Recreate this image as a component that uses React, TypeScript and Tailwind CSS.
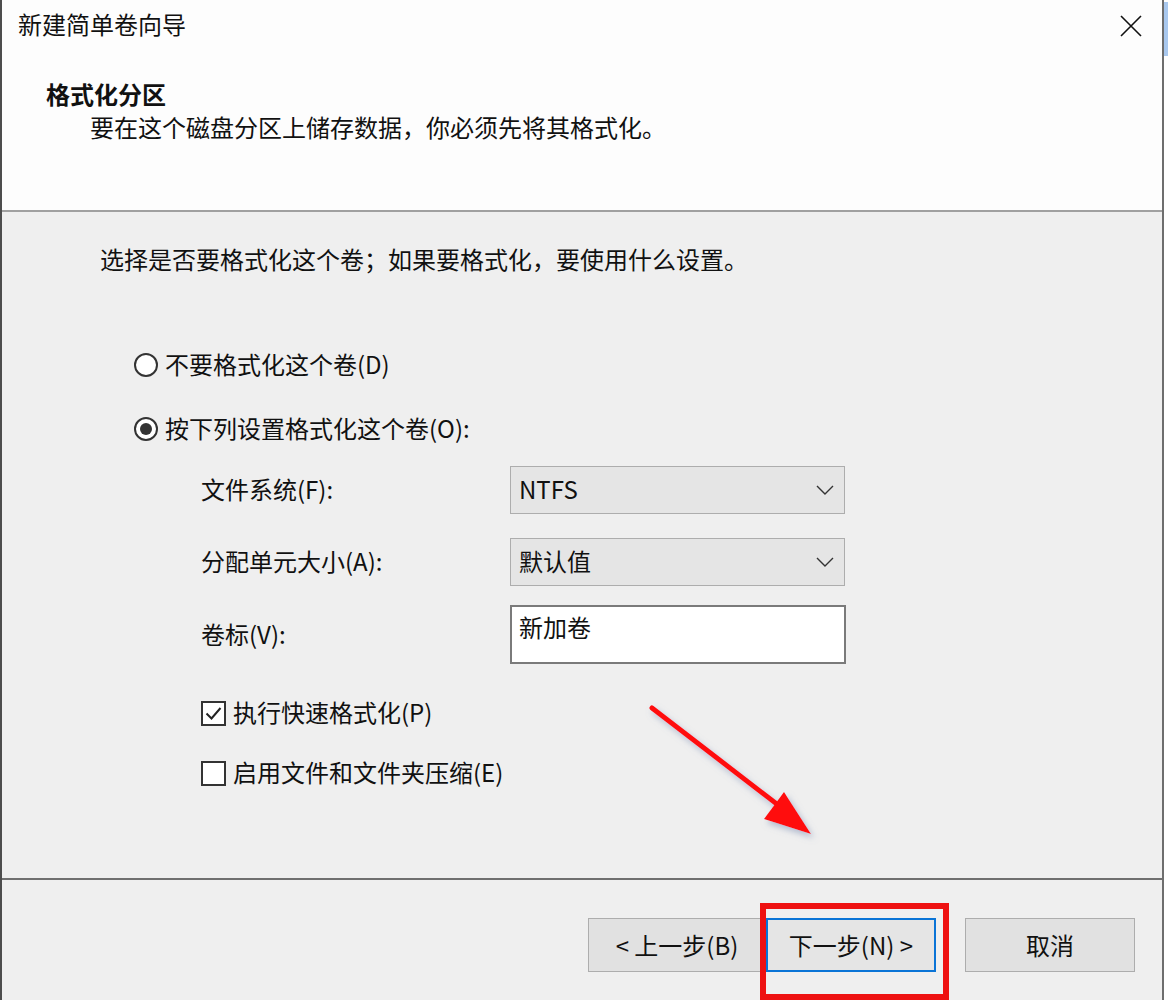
import React from "react";

const font = { fontFamily: '"Noto Sans CJK SC", "Noto Sans", sans-serif' };

function Radio({ checked, label }: { checked?: boolean; label: string }) {
  return (
    <div className="flex h-[32px] items-center">
      <span className="flex h-[24px] w-[24px] items-center justify-center rounded-full border-2 border-[#333] bg-white">
        {checked && <span className="h-[12px] w-[12px] rounded-full bg-[#333]" />}
      </span>
      <span className="ml-[7px] -translate-y-[1px]">{label}</span>
    </div>
  );
}

function Check({ checked, label }: { checked?: boolean; label: string }) {
  return (
    <div className="flex h-[32px] items-center">
      <span className="flex h-[25px] w-[25px] items-center justify-center border-2 border-[#333] bg-white">
        {checked && (
          <svg width="19" height="19" viewBox="0 0 19 19">
            <path d="M2.5 9.5 L7.5 14.5 L16.5 4" fill="none" stroke="#222" strokeWidth="2" />
          </svg>
        )}
      </span>
      <span className="ml-[7px] -translate-y-[1px]">{label}</span>
    </div>
  );
}

function Select({ value }: { value: string }) {
  return (
    <div className="flex h-[48px] w-[335px] items-center justify-between border border-[#adadad] bg-[#e5e5e5] pl-[8px] pr-[10px]">
      <span className="-translate-y-[1px]">{value}</span>
      <svg width="18" height="10" viewBox="0 0 18 10">
        <path d="M1 1 L9 9 L17 1" fill="none" stroke="#333" strokeWidth="1.4" />
      </svg>
    </div>
  );
}

function FormRow({ label, children, className }: { label: string; children: React.ReactNode; className?: string }) {
  return (
    <div className={"flex items-center " + (className ?? "")}>
      <span className="w-[309px] -translate-y-[1px]">{label}</span>
      {children}
    </div>
  );
}

export default function App() {
  return (
    <div className="relative flex h-[1000px] w-[1168px] overflow-hidden text-[24px] text-[#111]" style={font}>
      {/* dialog */}
      <div className="flex w-[1162px] flex-col border-l-2 border-[#4d4d4d]">
        {/* header */}
        <div className="h-[210px] bg-[#fdfdfd]">
          <div className="flex items-center justify-between pl-[16px] pr-[19px] pt-[8px]">
            <span className="leading-[32px]">新建简单卷向导</span>
            <svg width="24" height="24" viewBox="0 0 24 24" className="translate-y-[2px]">
              <path d="M2 2 L22 22 M22 2 L2 22" stroke="#111" strokeWidth="1.6" />
            </svg>
          </div>
          <div className="mt-[38px] pl-[44px] font-bold leading-[32px]">格式化分区</div>
          <div className="mt-[1px] pl-[88px] leading-[32px]">要在这个磁盘分区上储存数据，你必须先将其格式化。</div>
        </div>
        <div className="h-[2px] bg-[#a0a0a0]" />
        {/* body */}
        <div className="h-[666px] bg-[#efefef] pt-[31px]">
          <div className="pl-[98px] leading-[32px]">选择是否要格式化这个卷；如果要格式化，要使用什么设置。</div>
          <div className="mt-[74px] pl-[132px]">
            <Radio label="不要格式化这个卷(D)" />
          </div>
          <div className="mt-[32px] pl-[132px]">
            <Radio checked label="按下列设置格式化这个卷(O):" />
          </div>
          <div className="pl-[199px]">
            <FormRow label="文件系统(F):" className="mt-[21px]">
              <Select value="NTFS" />
            </FormRow>
            <FormRow label="分配单元大小(A):" className="mt-[24px]">
              <Select value="默认值" />
            </FormRow>
            <FormRow label="卷标(V):" className="mt-[19px]">
              <div className="h-[59px] w-[336px] border-2 border-[#7a7a7a] bg-white pl-[7px] pt-[4px] leading-[32px]">
                新加卷
              </div>
            </FormRow>
            <div className="mt-[33px]">
              <Check checked label="执行快速格式化(P)" />
            </div>
            <div className="mt-[28px]">
              <Check label="启用文件和文件夹压缩(E)" />
            </div>
          </div>
        </div>
        {/* footer */}
        <div className="h-[2px] bg-[#6f6f6f]" />
        <div className="flex flex-1 items-start bg-[#efefef] pl-[586px] pt-[38px]">
          <button className="flex h-[54px] w-[178px] items-center justify-center border border-[#adadad] bg-[#e1e1e1]">
            &lt; 上一步(B)
          </button>
          <button className="flex h-[54px] w-[170px] items-center justify-center border-2 border-[#0a74d6] bg-[#e5e5e5]">
            下一步(N) &gt;
          </button>
          <button className="ml-[29px] flex h-[54px] w-[170px] items-center justify-center border border-[#adadad] bg-[#e1e1e1]">
            取消
          </button>
        </div>
      </div>
      {/* right window edge */}
      <div className="flex w-[6px] flex-col">
        <div className="h-full w-[2px] bg-[#6e6e6e]" />
      </div>
      <div className="absolute right-0 top-0 h-[56px] w-[4px] border-t-2 border-white bg-[#a9c8ee]" />

      {/* red annotation box */}
      <div className="absolute left-[760px] top-[903px] h-[97px] w-[189px] border-[6px] border-[#ee1111]" />

      {/* red arrow */}
      <svg className="absolute left-0 top-0" width="1168" height="1000" viewBox="0 0 1168 1000">
        <defs>
          <filter id="sh" x="-20%" y="-20%" width="140%" height="140%">
            <feDropShadow dx="3" dy="4" stdDeviation="3" floodColor="#7d8fb3" floodOpacity="0.55" />
          </filter>
        </defs>
        <g filter="url(#sh)">
          <line x1="652" y1="708" x2="782" y2="808" stroke="#ff1010" strokeWidth="5" strokeLinecap="round" />
          <polygon points="811,834 764,819 784,792" fill="#ff1010" />
        </g>
      </svg>
    </div>
  );
}
